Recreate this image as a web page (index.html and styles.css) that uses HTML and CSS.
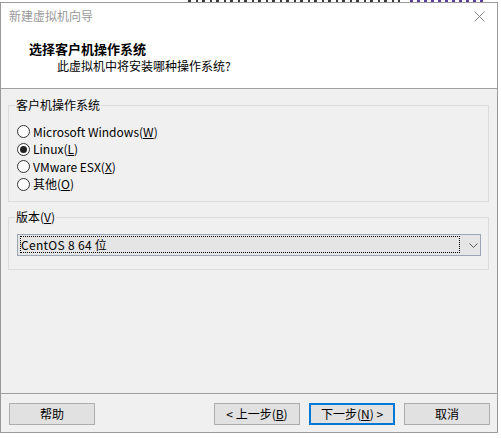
FILE: index.html
```html
<!DOCTYPE html>
<html lang="zh-CN">
<head>
<meta charset="utf-8">
<title>新建虚拟机向导</title>
<link rel="stylesheet" href="styles.css">
</head>
<body>
<div class="fringe">
  <span class="seg s1"></span><span class="seg s2"></span>
</div>
<div class="window">
  <div class="top">
    <div class="titlebar">
      <span class="title">新建虚拟机向导</span>
      <svg class="close" width="11" height="11" viewBox="0 0 11 11"><path d="M0.5 0.5 L10.5 10.5 M10.5 0.5 L0.5 10.5" stroke="#8a8a8a" stroke-width="1" fill="none"/></svg>
    </div>
    <div class="heading">选择客户机操作系统</div>
    <div class="sub">此虚拟机中将安装哪种操作系统?</div>
  </div>
  <div class="content">
    <fieldset class="group g1">
      <legend>客户机操作系统</legend>
      <div class="radio"><span class="dot"></span><span>Microsoft Windows(<u>W</u>)</span></div>
      <div class="radio"><span class="dot on"></span><span>Linux(<u>L</u>)</span></div>
      <div class="radio"><span class="dot"></span><span>VMware ESX(<u>X</u>)</span></div>
      <div class="radio"><span class="dot"></span><span>其他(<u>O</u>)</span></div>
    </fieldset>
    <fieldset class="group g2">
      <legend>版本(<u>V</u>)</legend>
      <div class="combo">
        <span class="focus">CentOS 8 64 位</span>
        <svg class="chev" width="9" height="5" viewBox="0 0 9 5"><path d="M0.5 0.5 L4.5 4.5 L8.5 0.5" stroke="#5a5a5a" stroke-width="1" fill="none"/></svg>
      </div>
    </fieldset>
  </div>
  <div class="footer">
    <button class="btn">帮助</button>
    <div class="right">
      <button class="btn">&lt; 上一步(<u>B</u>)</button>
      <button class="btn primary">下一步(<u>N</u>) &gt;</button>
      <button class="btn">取消</button>
    </div>
  </div>
</div>
</body>
</html>
```
FILE: styles.css
```css
html, body {
  margin: 0;
  padding: 0;
}
body {
  width: 501px;
  height: 438px;
  background: #ffffff;
  font-family: "Noto Sans CJK SC", "Microsoft YaHei", sans-serif;
  font-size: 12px;
  color: #000;
  overflow: hidden;
}
.fringe {
  height: 2px;
  display: flex;
}
.seg { height: 2px; display: block; }
.s1 {
  margin-left: 188px;
  width: 212px;
  background: repeating-linear-gradient(90deg, #3a3a3a 0 3px, transparent 3px 8px, #3a3a3a 8px 10px, transparent 10px 14px);
}
.s2 {
  margin-left: 10px;
  width: 76px;
  background: repeating-linear-gradient(90deg, #5b3f9e 0 3px, transparent 3px 7px);
}

.window {
  width: 496px;
  height: 429px;
  border: 1px solid #9a9a9a;
  background: #f0f0f0;
  display: flex;
  flex-direction: column;
}
.top {
  background: #ffffff;
  height: 85px;
  border-bottom: 1px solid #a0a0a0;
}
.titlebar {
  height: 26px;
  display: flex;
  align-items: center;
  justify-content: space-between;
  padding: 0 12px 0 8px;
}
.title {
  color: #999999;
  line-height: 16px;
}
.close { display: block; }
.heading {
  font-size: 13px;
  font-weight: bold;
  line-height: 17px;
  padding-left: 28px;
  margin-top: 11px;
}
.sub {
  line-height: 16px;
  padding-left: 56px;
  margin-top: 1px;
}
.content {
  padding: 8px 8px 0 7px;
}
.group {
  margin: 0;
  border: 1px solid #dcdcdc;
  padding: 10px 7px 8px 8px;
  min-width: 0;
}
.group legend {
  margin-left: -2px;
  padding: 0 1px;
  line-height: 16px;
}
.g2 {
  margin-top: 7px;
  padding-top: 9px;
  padding-bottom: 13px;
}
.radio {
  height: 17.5px;
  display: flex;
  align-items: center;
  gap: 3px;
  line-height: 16px;
}
.dot {
  width: 11px;
  height: 11px;
  border: 1px solid #333;
  border-radius: 50%;
  background: #fff;
  display: flex;
  align-items: center;
  justify-content: center;
  flex: none;
}
.dot.on::after {
  content: "";
  width: 7px;
  height: 7px;
  border-radius: 50%;
  background: #222;
}
.combo {
  height: 20px;
  border: 1px solid #9aa6b4;
  background: #e5e5e5;
  display: flex;
  align-items: center;
  padding: 0 2px;
}
.focus {
  width: 439px;
  height: 15px;
  border: 1px dotted #000;
  line-height: 15px;
  letter-spacing: 0.3px;
  margin-top: -1px;
}
.chev {
  display: block;
  margin-left: 9px;
}
.footer {
  margin-top: auto;
  border-top: 1px solid #a0a0a0;
  padding: 9px 7px 7px 8px;
  display: flex;
  justify-content: space-between;
}
.right {
  display: flex;
  gap: 9px;
}
.btn {
  width: 86px;
  height: 22px;
  border: 1px solid #adadad;
  background: #e1e1e1;
  font-family: inherit;
  font-size: 12px;
  color: #000;
  padding: 0;
  margin: 0;
  line-height: 16px;
}
.btn.primary {
  border: 2px solid #0078d7;
}
```
